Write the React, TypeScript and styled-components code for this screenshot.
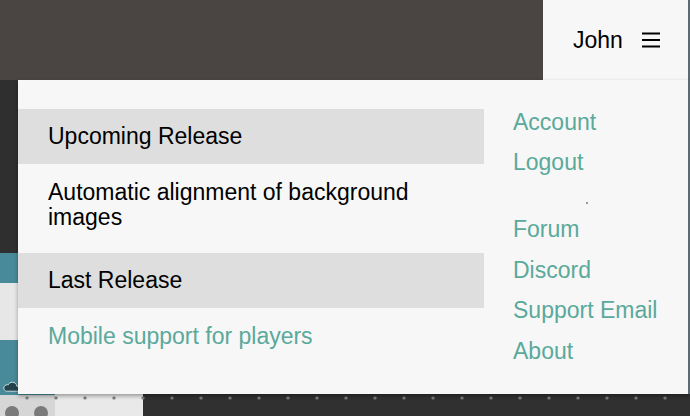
import React from "react";
import styled, { createGlobalStyle } from "styled-components";

const Global = createGlobalStyle`
  html, body {
    margin: 0;
    padding: 0;
    background: #303030;
  }
  body {
    font-family: "Liberation Sans", Arial, sans-serif;
  }
`;

const releases = [
  { title: "Upcoming Release", text: "Automatic alignment of background images", link: false },
  { title: "Last Release", text: "Mobile support for players", link: true },
];

const accountLinks = ["Account", "Logout"];
const communityLinks = ["Forum", "Discord", "Support Email", "About"];

const sideBlocks: { tone: "dark" | "teal" | "light"; h: number; cloud?: boolean }[] = [
  { tone: "dark", h: 173 },
  { tone: "teal", h: 30 },
  { tone: "light", h: 57 },
  { tone: "teal", h: 55, cloud: true },
];

const MenuIcon = () => (
  <svg width="18" height="16" viewBox="0 0 18 16">
    <path d="M0 1.5h18M0 8h18M0 14.5h18" stroke="#000" strokeWidth="2" />
  </svg>
);

const CloudIcon = () => (
  <svg width="17" height="11" viewBox="0 0 17 11">
    <path
      d="M3.5 10.2h10.3c1.5 0 2.6-1.1 2.6-2.5s-1.1-2.4-2.5-2.4c-.3-2.4-2.2-4.1-4.6-4.1-1.8 0-3.3 1-4 2.6-.3-.1-.6-.1-.9-.1C2.4 3.7.8 5.2.8 7s1.2 3.2 2.7 3.2z"
      fill="#24434c"
      stroke="#c9dde2"
      strokeWidth="1"
    />
  </svg>
);

const App = () => {
  return (
    <Page>
      <Global />
      <TopBar>
        <Toolbar />
        <UserButton>
          John
          <MenuIcon />
        </UserButton>
      </TopBar>
      <Workspace>
        <Sidebar>
          {sideBlocks.map((b, i) => (
            <SideBlock key={i} $tone={b.tone} $h={b.h}>
              {b.cloud && <CloudIcon />}
            </SideBlock>
          ))}
        </Sidebar>
        <Palette />
        <Stage />
      </Workspace>
      <Footer>
        <Tray>
          <Knob />
          <Knob />
        </Tray>
        <Palette />
        <Stage />
      </Footer>

      <Dropdown>
        <ReleaseColumn>
          {releases.map((r) => (
            <React.Fragment key={r.title}>
              <SectionTitle>{r.title}</SectionTitle>
              <SectionBody $link={r.link}>{r.text}</SectionBody>
            </React.Fragment>
          ))}
        </ReleaseColumn>
        <LinkColumn>
          {accountLinks.map((l) => (
            <MenuLink key={l}>{l}</MenuLink>
          ))}
          <Divider />
          {communityLinks.map((l) => (
            <MenuLink key={l}>{l}</MenuLink>
          ))}
        </LinkColumn>
      </Dropdown>
    </Page>
  );
};

export default App;

const Page = styled.div`
  position: relative;
  width: 690px;
  height: 416px;
  overflow: hidden;
  display: flex;
  flex-direction: column;
`;

const TopBar = styled.div`
  display: flex;
  height: 80px;
  flex-shrink: 0;
`;

const Toolbar = styled.div`
  flex: 1;
  background: #4a4542;
`;

const UserButton = styled.div`
  width: 115px;
  padding-left: 30px;
  display: flex;
  align-items: center;
  gap: 19px;
  background: #f7f7f7;
  border-right: 2px solid #5d6a73;
  font-size: 23px;
  line-height: 25px;
  color: #000;
  cursor: pointer;
`;

const Workspace = styled.div`
  display: flex;
  height: 315px;
  flex-shrink: 0;
`;

const Sidebar = styled.div`
  width: 55px;
  display: flex;
  flex-direction: column;
`;

const toneColors = {
  dark: "#2f2f2f",
  teal: "#488a99",
  light: "#e7e7e7",
};

const SideBlock = styled.div<{ $tone: "dark" | "teal" | "light"; $h: number }>`
  height: ${(p) => p.$h}px;
  background: ${(p) => toneColors[p.$tone]};
  display: flex;
  align-items: flex-end;
  padding: 0 0 3px 3px;
  box-sizing: border-box;
`;

const Palette = styled.div`
  width: 88px;
  background: #e9e9e9;
`;

const Stage = styled.div`
  flex: 1;
  background: #303030;
`;

const Footer = styled.div`
  position: relative;
  display: flex;
  flex: 1;

  &::after {
    content: "";
    position: absolute;
    left: 0;
    right: 0;
    top: 0;
    height: 8px;
    background-image: radial-gradient(circle, #7c7c7c 1.3px, transparent 1.9px);
    background-size: 29px 8px;
    background-position: 12.5px -1px;
    background-repeat: repeat-x;
  }
`;

const Tray = styled.div`
  width: 55px;
  background: #d6d6d6;
  display: flex;
  gap: 15px;
  padding: 11px 0 0 5px;
  box-sizing: border-box;
`;

const Knob = styled.div`
  width: 14px;
  height: 14px;
  border-radius: 50%;
  background: #7a7a7a;
  flex-shrink: 0;
`;

const Dropdown = styled.div`
  position: absolute;
  top: 80px;
  left: 18px;
  right: 0;
  height: 314px;
  display: flex;
  background: #f7f7f7;
  border-right: 2px solid #5d6a73;
  box-shadow: 0 2px 4px rgba(0, 0, 0, 0.35);
  font-size: 23px;
  line-height: 25px;
  z-index: 10;
`;

const ReleaseColumn = styled.div`
  width: 466px;
  padding-top: 29px;
`;

const SectionTitle = styled.div`
  background: #dedede;
  color: #000;
  padding: 15px 30px 15px;
`;

const SectionBody = styled.div<{ $link?: boolean }>`
  color: ${(p) => (p.$link ? "#5aa99b" : "#000")};
  padding: 16px 30px 23px;
  cursor: ${(p) => (p.$link ? "pointer" : "default")};
`;

const LinkColumn = styled.div`
  flex: 1;
  padding-top: 22px;
  display: flex;
  flex-direction: column;
`;

const MenuLink = styled.a`
  display: block;
  padding: 7.75px 29px;
  color: #5aa99b;
  text-decoration: none;
  cursor: pointer;
`;

const Divider = styled.div`
  position: relative;
  height: 26.5px;

  &::after {
    content: "";
    position: absolute;
    left: 102px;
    top: 19px;
    width: 2px;
    height: 2px;
    background: #9a9a9a;
  }
`;
